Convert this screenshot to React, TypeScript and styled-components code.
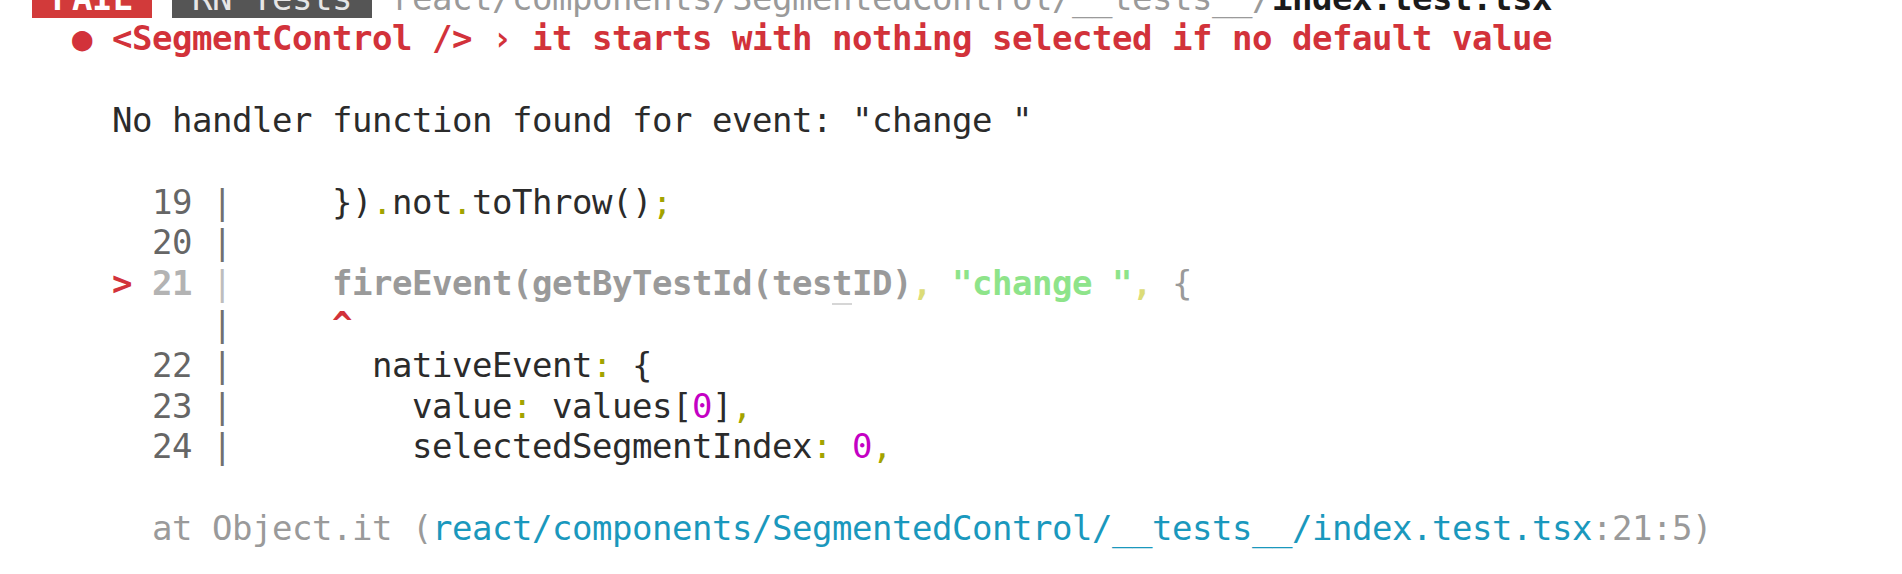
import React from "react";
import styled, { createGlobalStyle } from "styled-components";

const Global = createGlobalStyle`
  html, body {
    margin: 0;
    padding: 0;
    background: #ffffff;
    overflow: hidden;
  }
  #root {
    width: 1902px;
    height: 574px;
    overflow: hidden;
  }
`;

const Terminal = styled.div`
  margin-top: -22.4px;
  padding-left: 32px;
  font-family: "DejaVu Sans Mono", "Liberation Mono", monospace;
  font-size: 34px;
  letter-spacing: -0.47px;
  line-height: 40.8px;
  color: #2b2b2b;
`;

const Line = styled.div<{ $indent?: number }>`
  white-space: pre;
  height: 40.8px;
  padding-left: ${(p) => (p.$indent ?? 0) * 20}px;
`;

const Tok = styled.span<{ $c?: string; $b?: boolean }>`
  color: ${(p) => p.$c ?? "inherit"};
  font-weight: ${(p) => (p.$b ? 700 : 400)};
`;

const Badge = styled.span<{ $bg: string; $fg: string; $b?: boolean }>`
  background: ${(p) => p.$bg};
  color: ${(p) => p.$fg};
  font-weight: ${(p) => (p.$b ? 700 : 400)};
`;

const Cursor = styled.span`
  text-decoration: underline;
  text-decoration-color: #d6d6d6;
  text-decoration-thickness: 2px;
  text-underline-offset: 8px;
`;

const RED = "#d2323a";
const GUTTER = "#666666";
const PIPE = "#707070";
const DIM = "#b3b3b3";
const YEL = "#a3a300";
const YEL_LIGHT = "#dcdc78";
const GREEN = "#8ee48a";
const MAG = "#c400c4";
const GRAY = "#9a9a9a";
const CYAN = "#1a98bd";
const TEXT = "#2b2b2b";

type GutterProps = { n: string; marked?: boolean };

const Gutter: React.FC<GutterProps> = ({ n, marked }) =>
  marked ? (
    <>
      <Tok $c={RED} $b>
        {">"}
      </Tok>
      <Tok> </Tok>
      <Tok $c={DIM} $b>
        {n}
      </Tok>
      <Tok> </Tok>
      <Tok $c={"#bdbdbd"}>|</Tok>
    </>
  ) : (
    <>
      <Tok $c={GUTTER}>{"  " + n} </Tok>
      <Tok $c={PIPE}>|</Tok>
    </>
  );

export default function App() {
  return (
    <>
      <Global />
      <Terminal>
        <Line>
          <Badge $bg="#d23a3a" $fg="#ffffff" $b>
            {" FAIL "}
          </Badge>{" "}
          <Badge $bg="#555555" $fg="#e6e6e6">
            {" RN Tests "}
          </Badge>{" "}
          <Tok $c={GRAY}>react/components/SegmentedControl/__tests__/</Tok>
          <Tok $c="#1a1a1a" $b>
            index.test.tsx
          </Tok>
        </Line>
        <Line $indent={2}>
          <Tok $c={RED} $b>
            ● {"<SegmentControl />"} › it starts with nothing selected if no default value
          </Tok>
        </Line>
        <Line />
        <Line $indent={4}>
          <Tok $c={TEXT}>No handler function found for event: "change "</Tok>
        </Line>
        <Line />
        <Line $indent={4}>
          <Gutter n="19" />
          <Tok>{"     })"}</Tok>
          <Tok $c={YEL}>.</Tok>
          <Tok>not</Tok>
          <Tok $c={YEL}>.</Tok>
          <Tok>toThrow()</Tok>
          <Tok $c={YEL}>;</Tok>
        </Line>
        <Line $indent={4}>
          <Gutter n="20" />
        </Line>
        <Line $indent={4}>
          <Gutter n="21" marked />
          <Tok $c="#9a9a9a" $b>
            {"     fireEvent(getByTestId(tes"}
            <Cursor>t</Cursor>
            {"ID)"}
          </Tok>
          <Tok $c={YEL_LIGHT} $b>
            ,
          </Tok>
          <Tok> </Tok>
          <Tok $c={GREEN} $b>
            "change "
          </Tok>
          <Tok $c={YEL_LIGHT} $b>
            ,
          </Tok>
          <Tok $c="#9a9a9a"> {"{"}</Tok>
        </Line>
        <Line $indent={4}>
          <Tok $c={PIPE}>{"     |"}</Tok>
          <Tok>{"     "}</Tok>
          <Tok $c={RED} $b>
            ^
          </Tok>
        </Line>
        <Line $indent={4}>
          <Gutter n="22" />
          <Tok>{"       nativeEvent"}</Tok>
          <Tok $c={YEL}>:</Tok>
          <Tok> {"{"}</Tok>
        </Line>
        <Line $indent={4}>
          <Gutter n="23" />
          <Tok>{"         value"}</Tok>
          <Tok $c={YEL}>:</Tok>
          <Tok> values[</Tok>
          <Tok $c={MAG}>0</Tok>
          <Tok>]</Tok>
          <Tok $c={YEL}>,</Tok>
        </Line>
        <Line $indent={4}>
          <Gutter n="24" />
          <Tok>{"         selectedSegmentIndex"}</Tok>
          <Tok $c={YEL}>:</Tok>
          <Tok> </Tok>
          <Tok $c={MAG}>0</Tok>
          <Tok $c={YEL}>,</Tok>
        </Line>
        <Line />
        <Line $indent={6}>
          <Tok $c={GRAY}>at Object.it (</Tok>
          <Tok $c={CYAN}>react/components/SegmentedControl/__tests__/index.test.tsx</Tok>
          <Tok $c={GRAY}>:21:5)</Tok>
        </Line>
      </Terminal>
    </>
  );
}
